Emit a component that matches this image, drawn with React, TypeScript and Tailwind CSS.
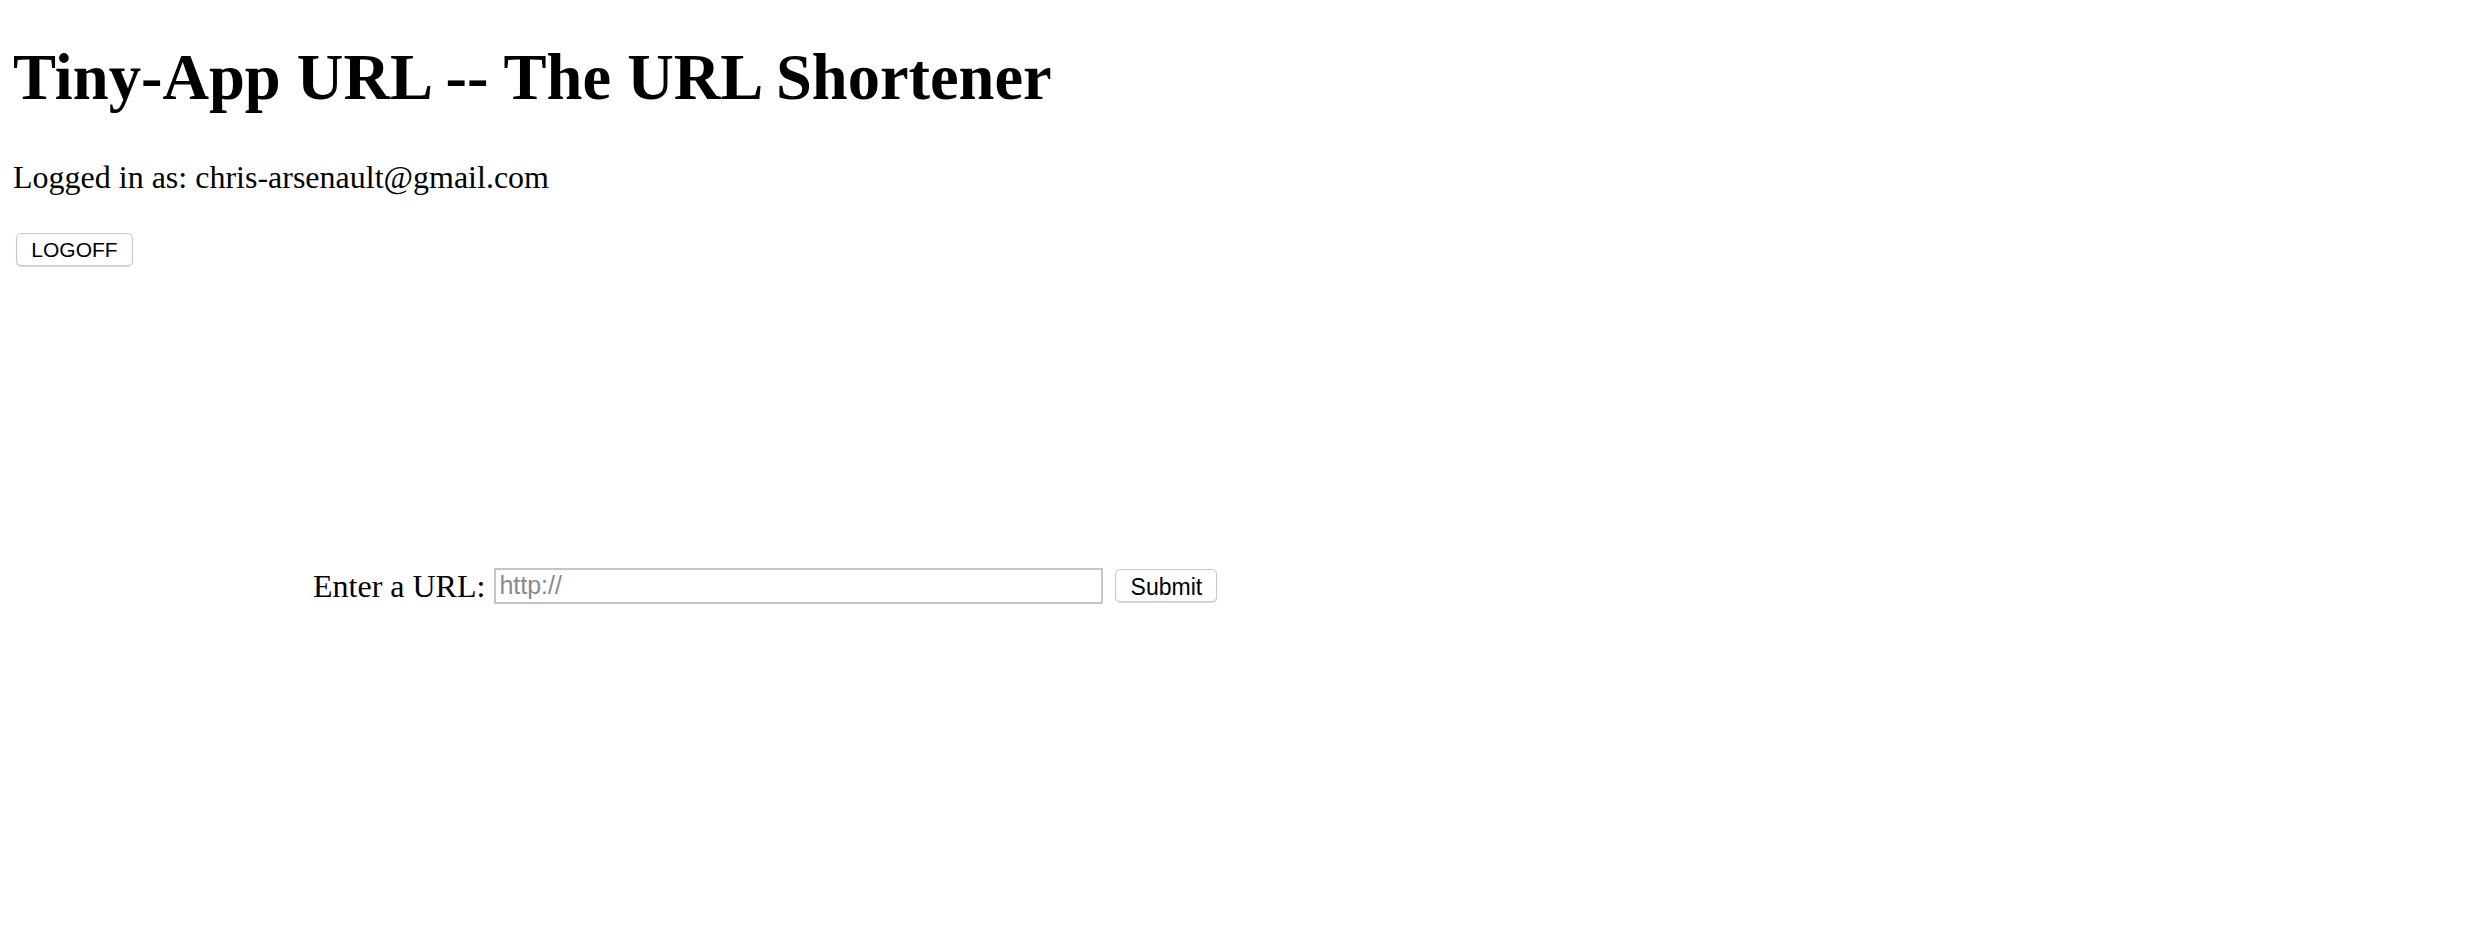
import React from 'react';

export default function App() {
  return (
    <div className="min-h-screen bg-white text-black px-[13px] font-['Liberation_Serif',serif]">
      <h1 className="pt-[46px] text-[64.5px] font-bold leading-none">Tiny-App URL -- The URL Shortener</h1>

      <p className="mt-[50px] text-[32px] leading-none">Logged in as: chris-arsenault@gmail.com</p>

      <button
        type="button"
        className="mt-[40px] h-[33px] w-[117px] ml-[3px] rounded-[5px] border border-[#c8c8c8] bg-white shadow-[0_1px_1px_rgba(0,0,0,0.15)] text-[21px] font-['Liberation_Sans',sans-serif] text-black"
      >
        LOGOFF
      </button>

      <form className="mt-[302px] pl-[300px] flex items-center" onSubmit={(e) => e.preventDefault()}>
        <label className="text-[32px] leading-none mr-[9px]">Enter a URL:</label>
        <input
          type="text"
          placeholder="http://"
          className="h-[36px] w-[609px] border-2 border-[#c6c6c6] px-[3px] text-[25px] font-['Liberation_Sans',sans-serif] placeholder:text-[#8a8a8a] outline-none"
        />
        <button
          type="submit"
          className="ml-[12px] h-[33px] w-[102px] rounded-[5px] border border-[#c8c8c8] bg-white shadow-[0_1px_1px_rgba(0,0,0,0.15)] text-[23px] font-['Liberation_Sans',sans-serif] text-black"
        >
          Submit
        </button>
      </form>
    </div>
  );
}
